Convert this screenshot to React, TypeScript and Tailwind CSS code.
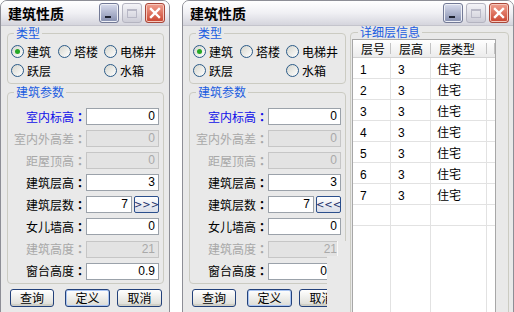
import React from "react";

const cjk = "font-['Noto_Sans_CJK_SC','Noto_Sans',sans-serif]";
const num = "font-['Liberation_Sans',Arial,sans-serif]";

type Row = { label: string; value: string; tone?: "blue" | "off"; btn?: boolean };

const rows: Row[] = [
  { label: "室内标高", value: "0", tone: "blue" },
  { label: "室内外高差", value: "0", tone: "off" },
  { label: "距屋顶高", value: "0", tone: "off" },
  { label: "建筑层高", value: "3" },
  { label: "建筑层数", value: "7", btn: true },
  { label: "女儿墙高", value: "0" },
  { label: "建筑高度", value: "21", tone: "off" },
  { label: "窗台高度", value: "0.9" },
];

const floors = [1, 2, 3, 4, 5, 6, 7];

function TitleBar() {
  return (
    <div className="h-[25px] flex items-center pl-[7px] pr-[4px] bg-linear-to-b from-[#ffffff] via-[#f0f0f4] to-[#d5d5dd] border-b border-[#c4c4cc]">
      <span className="flex-1 text-[14px] font-bold leading-[16px] text-black">建筑性质</span>
      <div className="flex gap-[3px]">
        <div className="w-[20px] h-[20px] rounded-[3px] border border-[#737a96] bg-linear-to-b from-[#d9dded] to-[#858eae] shadow-[inset_0_0_0_1px_#eef0f6] flex items-end pl-[5px] pb-[4px]">
          <span className="w-[6px] h-[2px] bg-[#1e2230]" />
        </div>
        <div className="w-[20px] h-[20px] rounded-[3px] border border-[#b4b4c0] bg-linear-to-b from-[#f4f4f8] to-[#cdcdd7] flex items-center justify-center">
          <span className="w-[10px] h-[9px] border border-[#b8b8c6] border-t-2" />
        </div>
        <div className="w-[20px] h-[20px] rounded-[3px] border border-[#a8473a] bg-linear-to-b from-[#f0a090] to-[#c9422e] shadow-[inset_0_0_0_1px_#f6c8bc] flex items-center justify-center">
          <svg width="12" height="12" viewBox="0 0 12 12">
            <path d="M2 2 L10 10 M10 2 L2 10" stroke="#ffffff" strokeWidth="2.4" strokeLinecap="square" />
          </svg>
        </div>
      </div>
    </div>
  );
}

function Group({ title, className, children }: { title: string; className: string; children?: React.ReactNode }) {
  return (
    <fieldset className={`border border-[#cbcbc2] rounded-[4px] ${className}`}>
      <legend className="ml-[6px] px-[2px] text-[12px] leading-[12px] text-[#1a5ce0]">{title}</legend>
      {children}
    </fieldset>
  );
}

function Radio({ label, checked }: { label: string; checked?: boolean }) {
  return (
    <div className="flex items-center gap-[3px]">
      <span className="w-[13px] h-[13px] rounded-full border border-[#2b5b88] bg-linear-to-br from-[#d6d6ce] to-white flex items-center justify-center">
        {checked && <span className="w-[5px] h-[5px] rounded-full bg-[#25a825]" />}
      </span>
      <span className="text-[12px] leading-[14px] text-black">{label}</span>
    </div>
  );
}

function Field({ value, off, w }: { value: string; off?: boolean; w: string }) {
  return (
    <div
      className={`${w} h-[17px] border text-right pr-[3px] text-[12px] leading-[15px] ${num} ${
        off ? "border-[#c6c6c6] bg-[#e3e3e3] text-[#a9a9a9]" : "border-[#9ba2aa] bg-white text-black"
      }`}
    >
      {value}
    </div>
  );
}

function Button({ label, w, focus }: { label: string; w: string; focus?: boolean }) {
  return (
    <div
      className={`${w} h-[18px] rounded-[3px] border border-[#23417a] bg-linear-to-b from-white to-[#dcdcd6] flex items-center justify-center text-[12px] leading-[14px] text-black ${
        focus ? "shadow-[inset_0_0_0_1px_#a9c4f2]" : "shadow-[inset_0_-2px_0_#cfcfc6]"
      }`}
    >
      {label}
    </div>
  );
}

function FormPanel({ arrow }: { arrow: string }) {
  return (
    <div className="w-[157px] shrink-0 flex flex-col">
      <Group title="类型" className="mt-[1px] pt-[3px] pb-[3px]">
        <div className="grid grid-cols-[47px_46px_1fr] pl-[3px]">
          <div className="h-[19px] flex items-center"><Radio label="建筑" checked /></div>
          <div className="h-[19px] flex items-center"><Radio label="塔楼" /></div>
          <div className="h-[19px] flex items-center"><Radio label="电梯井" /></div>
          <div className="h-[19px] flex items-center"><Radio label="跃层" /></div>
          <div className="h-[19px]" />
          <div className="h-[19px] flex items-center"><Radio label="水箱" /></div>
        </div>
      </Group>
      <Group title="建筑参数" className="mt-[2px] pt-[10px] pb-[3px]">
        <div className="flex flex-col gap-[5.1px]">
          {rows.map((r) => (
            <div key={r.label} className="flex items-center h-[17px]">
              <span
                className={`w-[77px] flex justify-end text-[12px] leading-[14px] whitespace-nowrap ${
                  r.tone === "blue" ? "text-[#1010e8]" : r.tone === "off" ? "text-[#a8a8a8]" : "text-black"
                }`}
              >
                <span>{r.label}</span>
                <span className="w-[11px] text-center font-bold font-['Noto_Sans_CJK_JP',sans-serif]">：</span>
              </span>
              <div className="ml-[1px] flex gap-[2px]">
                {r.btn ? (
                  <>
                    <Field value={r.value} w="w-[46px]" />
                    <div className="w-[25px] h-[17px] rounded-[2px] border border-[#2b4f8c] bg-linear-to-b from-white to-[#d9dde8] flex items-center justify-center text-[10px] leading-[10px] text-[#1b2f6a] font-['DejaVu_Sans',sans-serif]">
                      {arrow}
                    </div>
                  </>
                ) : (
                  <Field value={r.value} off={r.tone === "off"} w="w-[73px]" />
                )}
              </div>
            </div>
          ))}
        </div>
      </Group>
      <div className="flex mt-[5px]">
        <Button label="查询" w="ml-[3px] w-[44px]" />
        <Button label="定义" w="ml-[11px] w-[45px]" focus />
        <Button label="取消" w="ml-[7px] w-[45px]" />
      </div>
    </div>
  );
}

const gridCols = "grid grid-cols-[38px_40px_56px_1fr]";

function FloorList() {
  return (
    <Group title="详细层信息" className="ml-[4px] w-[159px] h-[300px] pl-[1px] pr-[1px] pt-[1px] flex">
      <div className="h-[280px] flex flex-col bg-white border border-[#a7a7a7] border-b-0">
        <div className={`${gridCols} h-[18px] shrink-0 bg-linear-to-b from-white to-[#ebebeb] border-b border-[#d2d2d2]`}>
          {["层号", "层高", "层类型", ""].map((h, i) => (
            <div key={i} className="relative pl-[8px] text-[12px] leading-[17px] text-black">
              {h}
              <span className="absolute right-0 top-[3px] h-[11px] w-px bg-[#c3c3c3]" />
            </div>
          ))}
        </div>
        {floors.map((f) => (
          <div key={f} className={`${gridCols} h-[21px] shrink-0 border-b border-[#e2e2e2] text-[12px] leading-[14px] text-black`}>
            <div className={`pl-[7px] pt-[5px] border-r border-[#e2e2e2] ${num}`}>{f}</div>
            <div className={`pl-[7px] pt-[5px] border-r border-[#e2e2e2] ${num}`}>3</div>
            <div className="pl-[6px] pt-[4px] border-r border-[#e2e2e2]">住宅</div>
            <div />
          </div>
        ))}
        <div className={`${gridCols} h-[21px] shrink-0 border-b border-[#e2e2e2]`}>
          <div className="border-r border-[#e2e2e2]" />
          <div className="border-r border-[#e2e2e2]" />
          <div className="border-r border-[#e2e2e2]" />
          <div />
        </div>
        <div className={`${gridCols} flex-1`}>
          <div className="border-r border-[#e2e2e2]" />
          <div className="border-r border-[#e2e2e2]" />
          <div className="border-r border-[#e2e2e2]" />
          <div />
        </div>
      </div>
    </Group>
  );
}

export default function App() {
  return (
    <div className={`w-[514px] h-[312px] overflow-hidden bg-white flex gap-[12px] ${cjk}`}>
      <div className="w-[170px] h-[330px] shrink-0 flex flex-col border border-[#8d8e96] rounded-t-[7px] overflow-hidden bg-[#e9e9e9]">
        <TitleBar />
        <div className="pl-[6px]">
          <FormPanel arrow=">>>" />
        </div>
      </div>
      <div className="relative w-[332px] h-[330px] shrink-0 flex flex-col border border-[#8d8e96] rounded-t-[7px] overflow-hidden bg-[#e9e9e9]">
        <TitleBar />
        <div className="flex pl-[6px]">
          <FormPanel arrow="<<<" />
          <FloorList />
        </div>
        <div className="absolute left-[154px] top-[240px] w-[10px] h-[90px] bg-[#e9e9e9] border-l border-[#f8f8f8]" />
        <div className="absolute left-[144px] top-[255px] w-[20px] h-[75px] bg-[#e9e9e9]" />
      </div>
    </div>
  );
}
